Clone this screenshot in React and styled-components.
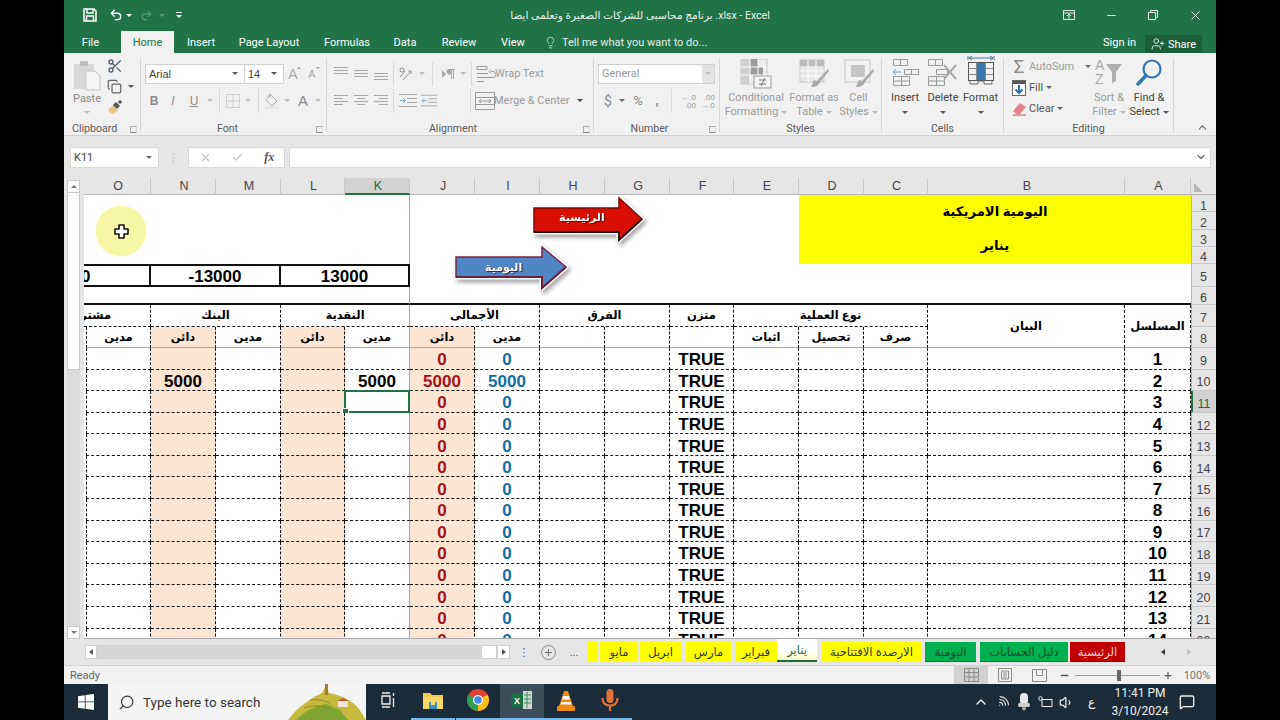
// Excel window: اليومية الامريكية sheet
import React from "react";
import styled, { createGlobalStyle } from "styled-components";
import {
  Scissors,
  Copy,
  Undo2,
  Redo2,
  X,
  Minus,
  Lightbulb,
  UserPlus,
  Check,
  Search,
  ChevronUp,
  ChevronDown,
  Plus,
  Wifi,
  Volume1,
  MessageSquare,
} from "lucide-react";

const UI_FONT = `Roboto, "DejaVu Sans", sans-serif`;
const CELL_FONT = `"Liberation Sans", "DejaVu Sans", sans-serif`;
const GREEN = "#217346";
const PEACH_BG = "#fce5d3";

const GlobalStyle = createGlobalStyle`
  html, body { margin: 0; padding: 0; background: #000; }
  #root { width: 1280px; height: 720px; overflow: hidden; }
  * { box-sizing: border-box; }
`;

const Page = styled.div`
  width: 1152px;
  height: 720px;
  margin-left: 64px;
  display: flex;
  flex-direction: column;
  font-family: ${UI_FONT};
  font-size: 11px;
  color: #444;
  background: #e6e6e6;
`;

/* ---------- title bar ---------- */
const TitleBar = styled.header`
  height: 30px;
  display: grid;
  grid-template-columns: 1fr auto 1fr;
  align-items: center;
  background: ${GREEN};
  color: #fff;
`;
const Qat = styled.div`
  display: flex;
  align-items: center;
  padding-left: 17px;
`;
const QatSlot = styled.span`
  width: ${(p) => p.$w}px;
  display: flex;
  flex-direction: column;
  gap: 2px;
  align-items: center;
  justify-content: center;
`;
const QatLine = styled.i`
  width: 6px;
  height: 1px;
  background: #fff;
`;
const Title = styled.div`
  font-size: 10.6px;
  color: #e9f1ec;
  white-space: nowrap;
`;
const WinControls = styled.div`
  display: flex;
  justify-content: flex-end;
`;
const WinBtn = styled.span`
  width: 42px;
  display: flex;
  justify-content: center;
  align-items: center;
`;
const Caret = styled.i`
  display: inline-block;
  width: 0;
  height: 0;
  border-left: 3px solid transparent;
  border-right: 3px solid transparent;
  border-top: 3px solid ${(p) => p.$color || "#777"};
  flex: none;
`;

/* ---------- ribbon tabs ---------- */
const TabRow = styled.nav`
  height: 23px;
  display: flex;
  align-items: flex-end;
  background: ${GREEN};
  color: #fff;
  font-size: 11px;
`;
const RibbonTab = styled.span`
  width: ${(p) => p.$w}px;
  height: 22px;
  display: flex;
  align-items: center;
  justify-content: center;
  padding-right: ${(p) => p.$pr || 0}px;
  background: ${(p) => (p.$active ? "#f1f1f1" : "transparent")};
  color: ${(p) => (p.$active ? GREEN : "#fff")};
`;
const TellMe = styled.span`
  margin-left: 10px;
  height: 22px;
  display: flex;
  align-items: center;
  gap: 5px;
  color: #e3eee8;
`;
const SignIn = styled.span`
  margin-left: auto;
  height: 22px;
  display: flex;
  align-items: center;
  margin-right: 9px;
`;
const Share = styled.span`
  width: 57px;
  height: 18px;
  margin-right: 14px;
  display: flex;
  align-items: center;
  justify-content: center;
  gap: 3px;
  background: #1b5f39;
`;

/* ---------- ribbon ---------- */
const Ribbon = styled.section`
  height: 83px;
  display: flex;
  background: #f1f1f1;
  border-bottom: 1px solid #cfcfcf;
`;
const Group = styled.div`
  width: ${(p) => p.$w}px;
  display: flex;
  flex-direction: column;
  flex: none;
`;
const GroupBody = styled.div`
  height: 67px;
  display: flex;
`;
const GroupLabel = styled.div`
  position: relative;
  flex: 1;
  display: flex;
  align-items: center;
  justify-content: ${(p) => (p.$left ? "flex-start" : "center")};
  padding-top: 2px;
  padding-left: ${(p) => (p.$left ? 8 : 0)}px;
  padding-right: ${(p) => p.$pr || 0}px;
  font-size: 10.6px;
  color: #5a5a5a;
`;
const Launcher = styled.i`
  position: absolute;
  right: 3px;
  top: 6px;
  width: 7px;
  height: 7px;
  border-left: 1px solid #aaa;
  border-top: 1px solid #aaa;
  border-right: 1px solid #ddd;
  border-bottom: 1px solid #888;
`;
const GroupSep = styled.i`
  width: 1px;
  height: 74px;
  margin-top: 5px;
  background: #d6d6d6;
  flex: none;
`;
const Collapse = styled.div`
  flex: 1;
  display: flex;
  justify-content: flex-end;
  align-items: flex-end;
  padding: 0 7px 1px 0;
`;
const Stack = styled.div`
  display: flex;
  flex-direction: column;
  padding-top: ${(p) => p.$top ?? 7}px;
`;
const ToolRow = styled.div`
  height: 27px;
  display: flex;
  align-items: center;
  padding-left: ${(p) => p.$pad || 0}px;
`;
const Tool = styled.span`
  width: ${(p) => p.$w}px;
  height: 20px;
  display: flex;
  align-items: center;
  justify-content: center;
  color: ${(p) => p.$color || "#8b8b8b"};
  font-size: ${(p) => p.$size || 12}px;
  font-weight: ${(p) => p.$weight || 400};
  font-family: ${(p) => (p.$cell ? CELL_FONT : "inherit")};
  font-style: ${(p) => (p.$italic ? "italic" : "normal")};
  text-decoration: ${(p) => (p.$under ? "underline" : "none")};
  flex: none;
  white-space: nowrap;
`;
const SizeA = styled(Tool)`
  position: relative;
  &::after {
    content: "";
    position: absolute;
    right: ${(p) => p.$tick}px;
    top: 3px;
    border-left: 2px solid transparent;
    border-right: 2px solid transparent;
    ${(p) => (p.$down ? "border-top: 2px solid #999;" : "border-bottom: 2px solid #999;")}
  }
`;
const Div = styled.span`
  width: ${(p) => p.$w}px;
  height: 24px;
  display: flex;
  justify-content: center;
  flex: none;
  &::before {
    content: "";
    width: 1px;
    background: #d9d9d9;
  }
`;
const Combo = styled.span`
  width: ${(p) => p.$w}px;
  height: 20px;
  display: flex;
  align-items: center;
  justify-content: space-between;
  padding: 0 6px 0 3px;
  background: ${(p) => p.$bg || "#fff"};
  border: 1px solid #d0d0d0;
  margin-left: ${(p) => p.$ml || 0}px;
  margin-right: -1px;
  color: ${(p) => p.$color || "#444"};
  font-family: ${(p) => (p.$cell ? CELL_FONT : "inherit")};
  font-size: 11px;
`;
const ComboDrop = styled.span`
  width: 12px;
  height: 18px;
  margin-right: -6px;
  display: flex;
  align-items: center;
  justify-content: center;
  background: #e3e3e3;
`;
const ToolText = styled.span`
  font-size: 11px;
  margin-left: -2px;
  color: #9a9a9a;
  white-space: nowrap;
`;
const Paste = styled.div`
  width: 30px;
  margin-left: 8px;
  display: flex;
  flex-direction: column;
  align-items: center;
  padding-top: 7px;
  color: #8b8b8b;
  font-size: 11px;
`;
const PasteIcon = styled.div`
  height: 31px;
`;
const SmallColumn = styled.div`
  margin-left: 2px;
  padding-top: 3px;
  display: flex;
  flex-direction: column;
`;
const SmallRow = styled.div`
  height: 20.5px;
  display: flex;
  align-items: center;
  gap: 6px;
  padding-left: 3px;
`;
const LargeBtn = styled.div`
  width: ${(p) => p.$w}px;
  display: flex;
  flex-direction: column;
  align-items: center;
  flex: none;
  color: ${(p) => p.$color || "#9a9a9a"};
  font-size: 11px;
  line-height: 14px;
`;
const LargeIcon = styled.div`
  height: 38px;
  padding-top: ${(p) => p.$top ?? 6}px;
`;
const LabelLine = styled.div`
  height: 14px;
  display: flex;
  align-items: center;
  gap: 3px;
  white-space: nowrap;
`;
const EditCol = styled.div`
  width: 85px;
  padding: 3px 0 0 5px;
  flex: none;
`;
const EditRow = styled.div`
  height: 21px;
  display: flex;
  align-items: center;
  color: ${(p) => p.$color || "#555"};
  font-size: 11px;
  white-space: nowrap;
`;
const EditIcon = styled.span`
  width: 20px;
  display: flex;
  justify-content: center;
  flex: none;
`;

/* ---------- formula bar ---------- */
const FormulaBar = styled.div`
  height: 42px;
  padding: 0 5px 0 6px;
  display: flex;
  align-items: center;
  background: #e6e6e6;
`;
const NameBox = styled.div`
  width: 89px;
  height: 21px;
  display: flex;
  align-items: center;
  justify-content: space-between;
  padding: 0 6px 0 3px;
  background: #fff;
  border: 1px solid #d8d8d8;
  color: #444;
`;
const Grip = styled.div`
  width: 29px;
  display: flex;
  justify-content: center;
  color: #aaa;
  font-size: 10px;
`;
const FxBox = styled.div`
  width: 97px;
  height: 21px;
  display: flex;
  align-items: center;
  justify-content: space-around;
  background: #fff;
  border: 1px solid #d8d8d8;
  margin-right: 4px;
`;
const FxText = styled.span`
  font-family: "Liberation Serif", serif;
  font-style: italic;
  font-weight: 700;
  font-size: 12px;
  color: #555;
`;
const FormulaInput = styled.div`
  flex: 1;
  height: 21px;
  display: flex;
  align-items: center;
  justify-content: flex-end;
  padding-right: 3px;
  background: #fff;
  border: 1px solid #d8d8d8;
`;

/* ---------- sheet ---------- */
const SheetArea = styled.div`
  height: 461px;
  display: flex;
  background: #e6e6e6;
`;
const VScroll = styled.div`
  width: 20px;
  padding: 2px 4px 0 3px;
  display: flex;
  flex-direction: column;
  flex: none;
`;
const ScrollBtn = styled.div`
  height: 13px;
  display: flex;
  align-items: center;
  justify-content: center;
  background: #fff;
  border: 1px solid #c8c8c8;
  flex: none;
`;
const UpCaret = styled(Caret)`
  transform: rotate(180deg);
`;
const ScrollThumb = styled.div`
  height: 177px;
  background: #fff;
  border: 1px solid #c8c8c8;
  border-top: 0;
  flex: none;
`;
const ScrollTrack = styled.div`
  flex: 1;
  background: #dcdcdc;
`;
const SHEET_COLS = "67px 65px 65px 64px 65px 65px 65px 65px 65px 64px 65px 65px 64px 197px 66px 25px";
const SheetGrid = styled.div`
  position: relative;
  width: 1132px;
  height: 461px;
  overflow: hidden;
  display: grid;
  grid-template-columns: ${SHEET_COLS};
  grid-template-rows: 17px repeat(4, 17.25px) 22.5px 18px 22px 21.5px repeat(14, 21.58px);
  background: #fff;
  border-bottom: 1px solid #a8a8a8;
  font-family: ${CELL_FONT};
`;
const ColHead = styled.div`
  display: flex;
  align-items: center;
  justify-content: center;
  padding-left: 2px;
  font-size: 12.5px;
  color: ${(p) => (p.$selected ? "#1d6b40" : "#444")};
  background: ${(p) => (p.$selected ? "#d2d2d2" : "#e6e6e6")};
  border-right: 1px solid #c9c9c9;
  border-bottom: ${(p) => (p.$selected ? `2px solid ${GREEN}` : "1px solid #b5b5b5")};
`;
const Corner = styled.div`
  background: #e6e6e6;
  display: flex;
  align-items: flex-end;
  padding: 0 0 2px 3px;
  border-bottom: 1px solid #b5b5b5;
  &::before {
    content: "";
    border-left: 9px solid transparent;
    border-bottom: 9px solid #b7b7b7;
    transform: scaleX(-1);
  }
`;
const RowHead = styled.div`
  display: flex;
  align-items: center;
  justify-content: center;
  padding: 5px 1px 0 0;
  font-size: 12.5px;
  color: ${(p) => (p.$selected ? "#1d6b40" : "#444")};
  background: ${(p) => (p.$selected ? "#d2d2d2" : "#e6e6e6")};
  border-left: ${(p) => (p.$selected ? `2px solid ${GREEN}` : "1px solid #b5b5b5")};
  border-bottom: 1px solid #c9c9c9;
`;
const Blank = styled.div`
  grid-column: span ${(p) => p.$span};
  grid-row: span ${(p) => p.$rows || 1};
  border-right: ${(p) => (p.$freeze ? "1px solid #a8a8a8" : "0")};
  border-bottom: ${(p) => (p.$thick ? "2px solid #111" : "0")};
`;
const TitleCell = styled.div`
  grid-column: span 4;
  grid-row: span 4;
  display: flex;
  flex-direction: column;
  align-items: center;
  justify-content: space-around;
  padding-bottom: 2px;
  background: #ffff00;
  color: #000;
  font-weight: 700;
  font-size: 13.2px;
`;
const SumCell = styled.div`
  grid-column: span ${(p) => p.$span};
  display: flex;
  align-items: center;
  justify-content: center;
  overflow: hidden;
  padding-top: 3px;
  color: #000;
  font-weight: 700;
  font-size: 17px;
  border-top: 2px solid #111;
  border-bottom: 2px solid #111;
  border-right: 2px solid #111;
`;
const Clipped = styled.span`
  margin-left: -3px;
  margin-right: auto;
`;
const HeadCell = styled.div`
  grid-column: span ${(p) => p.$span || 1};
  grid-row: span ${(p) => p.$rows || 1};
  display: flex;
  align-items: center;
  justify-content: ${(p) => (p.$end ? "flex-end" : "center")};
  overflow: hidden;
  margin-left: ${(p) => (p.$first ? 2 : 0)}px;
  padding-right: ${(p) => (p.$end ? 39 : 0)}px;
  color: #000;
  font-weight: 700;
  font-size: 11.5px;
  white-space: nowrap;
  background: ${(p) => (p.$peach ? PEACH_BG : "#fff")};
  border-right: ${(p) => (p.$freeze ? "1px solid #a8a8a8" : "1px dashed #111")};
  border-bottom: ${(p) => (p.$freezeB ? "1px solid #a8a8a8" : "1px dashed #111")};
  border-left: ${(p) => (p.$first ? "1px dashed #111" : "0")};
`;
const Cell = styled.div`
  display: flex;
  align-items: center;
  justify-content: center;
  position: relative;
  margin-left: ${(p) => (p.$first ? 2 : 0)}px;
  padding-top: 3px;
  color: ${(p) => p.$color || "#000"};
  font-weight: 700;
  font-size: 17px;
  line-height: 1;
  background: ${(p) => (p.$peach ? PEACH_BG : "#fff")};
  border-right: ${(p) => (p.$freeze ? "1px solid #a8a8a8" : "1px dashed #111")};
  border-bottom: 1px dashed #111;
  border-left: ${(p) => (p.$first ? "1px dashed #111" : "0")};
`;
const Selection = styled.i`
  position: absolute;
  inset: -1px -1px -1px -1px;
  border: 2px solid ${GREEN};
  &::after {
    content: "";
    position: absolute;
    left: -4px;
    bottom: -4px;
    width: 5px;
    height: 5px;
    background: ${GREEN};
    border: 1px solid #fff;
  }
`;
const ArrowShape = styled.div`
  position: absolute;
  left: ${(p) => p.$left}px;
  top: ${(p) => p.$top}px;
  width: 120px;
  height: 60px;
  filter: drop-shadow(2px 3px 2px rgba(0, 0, 0, 0.35));
`;
const ArrowText = styled.span`
  position: absolute;
  left: ${(p) => p.$x}px;
  top: ${(p) => p.$y}px;
  color: #fff;
  font-size: 11px;
  font-weight: 700;
  white-space: nowrap;
  text-shadow: 1px 1px 1px rgba(60, 0, 0, 0.8);
`;
const Spotlight = styled.div`
  position: absolute;
  left: 12px;
  top: 28px;
  width: 50px;
  height: 50px;
  display: flex;
  align-items: center;
  justify-content: center;
  border-radius: 50%;
  background: #f6f6a4;
  box-shadow: 0 0 2px #f6f6a4;
`;

/* ---------- sheet tabs ---------- */
const SheetBar = styled.div`
  height: 26px;
  padding-left: 21px;
  display: flex;
  align-items: center;
  background: #e6e6e6;
`;
const HBtn = styled.span`
  width: ${(p) => p.$w}px;
  height: 14px;
  display: flex;
  align-items: center;
  justify-content: center;
  background: ${(p) => p.$bg || "#fff"};
  border: 1px solid #cfcfcf;
  flex: none;
`;
const HTrack = styled.span`
  width: 384px;
  height: 14px;
  background: #d6d6d6;
  flex: none;
`;
const BarSlot = styled.span`
  width: ${(p) => p.$w}px;
  margin-left: ${(p) => p.$ml || 0}px;
  display: flex;
  align-items: center;
  justify-content: center;
  color: #555;
  flex: none;
`;
const AddSheet = styled.span`
  width: 15px;
  height: 15px;
  display: flex;
  align-items: center;
  justify-content: center;
  border: 1px solid #888;
  border-radius: 50%;
`;
const SheetTab = styled.span`
  width: ${(p) => p.$w}px;
  height: 20px;
  margin-left: ${(p) => p.$ml || 0}px;
  margin-top: 0;
  display: flex;
  align-items: center;
  justify-content: center;
  overflow: hidden;
  flex: none;
  font-size: 11.5px;
  font-family: ${CELL_FONT};
  white-space: nowrap;
  color: ${(p) => p.$color};
  background: ${(p) => p.$bg};
  border-bottom: 1px solid ${(p) => p.$edge || "transparent"};
`;
const ActiveTab = styled(SheetTab)`
  height: 23px;
  margin-top: -3px;
  color: #1d6b40;
  background: linear-gradient(#fff 55%, #fbfbc0);
  border-bottom: 2px solid #1d6b40;
`;
const TabArrow = styled.i`
  width: 0;
  height: 0;
  border-top: 3.5px solid transparent;
  border-bottom: 3.5px solid transparent;
  ${(p) => (p.$left ? `border-right: 4px solid ${p.$color};` : `border-left: 4px solid ${p.$color};`)}
`;

/* ---------- status bar ---------- */
const StatusBar = styled.footer`
  height: 19px;
  padding-left: 6px;
  display: flex;
  align-items: center;
  background: #f1f1f1;
  border-top: 1px solid #d4d4d4;
  color: #666;
  font-size: 11px;
`;
const ReadyText = styled.span`
  margin-right: auto;
`;
const ViewBtn = styled.span`
  width: ${(p) => p.$w}px;
  height: 18px;
  display: flex;
  align-items: center;
  justify-content: center;
  background: ${(p) => (p.$active ? "#d2d2d2" : "transparent")};
  flex: none;
`;
const ZoomTrack = styled.span`
  position: relative;
  width: 85px;
  height: 1px;
  background: #9a9a9a;
  margin: 0 3px;
  flex: none;
`;
const ZoomThumb = styled.i`
  position: absolute;
  left: 42px;
  top: -5px;
  width: 4px;
  height: 11px;
  background: #666;
`;
const Percent = styled.span`
  width: 43px;
  padding-left: 5px;
  text-align: center;
  color: #777;
`;

/* ---------- task bar ---------- */
const TaskBar = styled.div`
  height: 36px;
  display: flex;
  align-items: stretch;
  background: #1a2c39;
  color: #fff;
`;
const StartBtn = styled.div`
  width: 44px;
  display: flex;
  align-items: center;
  justify-content: center;
`;
const SearchBox = styled.div`
  width: 258px;
  display: flex;
  align-items: center;
  padding-left: 10px;
  gap: 8px;
  background: #f4f4f4;
  color: #333;
  font-size: 13.5px;
  overflow: hidden;
`;
const SearchGlyph = styled(Search)`
  transform: scaleX(-1);
`;
const Hill = styled.svg`
  margin-left: auto;
  flex: none;
`;
const TaskIcon = styled.div`
  width: 44px;
  margin-left: ${(p) => p.$ml || 0}px;
  display: flex;
  align-items: center;
  justify-content: center;
  padding-bottom: 2px;
  background: ${(p) => (p.$active ? "#3b4e5a" : "transparent")};
  border-bottom: 2px solid ${(p) => (p.$run ? "#76b9ed" : "transparent")};
  flex: none;
`;
const Tray = styled.div`
  margin-left: auto;
  padding-right: 15px;
  display: flex;
  align-items: center;
`;
const TraySlot = styled.span`
  width: ${(p) => p.$w}px;
  display: flex;
  justify-content: center;
  align-items: center;
  font-size: 12px;
  flex: none;
`;
const TrayWifi = styled(Wifi)`
  transform: rotate(45deg);
`;
const Clock = styled.div`
  width: 66px;
  text-align: center;
  font-size: 12px;
  line-height: 18px;
  color: #f0f0f0;
`;

/* ---------- drawn icons ---------- */
const Lines = ({ rows, w = 14, color = "#a5a5a5" }) => (
  <svg width={w} height="16" viewBox={`0 0 ${w} 16`}>
    {rows.map(([y, x1, x2], i) => (
      <line key={i} x1={x1} x2={x2} y1={y} y2={y} stroke={color} strokeWidth="1" />
    ))}
  </svg>
);
const row3 = (a, b, c) => [
  [a, 0, 14],
  [b, 0, 14],
  [c, 0, 14],
];
const leftRows = [[2.5, 0, 14], [5.5, 0, 9], [8.5, 0, 14], [11.5, 0, 9]];
const midRows = [[2.5, 0, 14], [5.5, 3, 11], [8.5, 0, 14], [11.5, 3, 11]];
const rightRows = [[2.5, 0, 14], [5.5, 5, 14], [8.5, 0, 14], [11.5, 5, 14]];

const SaveIcon = () => (
  <svg width="14" height="14" viewBox="0 0 14 14" fill="none" stroke="#fff" strokeWidth="1.5">
    <path d="M1 1h10l2 2v10H1z" />
    <path d="M4 1v4h6V1M3.5 13V8h7v5" />
  </svg>
);
const RestoreIcon = () => (
  <svg width="10" height="10" viewBox="0 0 10 10" fill="none" stroke="#e8f0eb">
    <path d="M.5 2.5h7v7h-7zM2.5 2.5v-2h7v7h-2" />
  </svg>
);
const DisplayIcon = () => (
  <svg width="12" height="10" viewBox="0 0 12 10" fill="none" stroke="#e8f0eb">
    <path d="M.5.5h11v9H.5zM.5 3h11M6 9V4.5M4 6l2-2 2 2" />
  </svg>
);
const PasteGlyph = () => (
  <svg width="28" height="31" viewBox="0 0 28 31">
    <rect x="1" y="4" width="20" height="25" fill="#d8d8d8" />
    <rect x="7" y="1" width="8" height="5" rx="1" fill="#bdbdbd" />
    <path d="M13 11h9l5 5v14H13z" fill="#f6f6f6" stroke="#c4c4c4" />
  </svg>
);
const PainterIcon = () => (
  <svg width="16" height="16" viewBox="0 0 16 16">
    <path d="M1 11l5-5 5 5-4 4c-2 0-5-2-6-4z" fill="#e5c77a" />
    <path d="M6 6l3-3 4 4-3 3z" fill="#555" />
    <path d="M11 3l2-2 2 2-2 2z" fill="#444" />
  </svg>
);
const BorderIcon = () => (
  <svg width="14" height="14" viewBox="0 0 14 14" fill="none" stroke="#b5b5b5" strokeDasharray="1 1">
    <path d="M.5.5h13v13H.5zM7 .5v13M.5 7h13" />
  </svg>
);
const FillIcon = () => (
  <svg width="17" height="16" viewBox="0 0 17 16" fill="none" stroke="#a8a8a8">
    <path d="M6 1l7 7-5 5-6-6z" />
    <path d="M6 1v4" />
    <rect x="1" y="13.5" width="13" height="2" fill="#e4e4e4" stroke="none" />
  </svg>
);
const OrientIcon = () => (
  <svg width="18" height="16" viewBox="0 0 18 16" fill="none" stroke="#8f8f8f">
    <path d="M2 11l5-6M5 14L13 5M13 5h-3M13 5v3" />
    <circle cx="4" cy="4" r="2" />
  </svg>
);
const RtlIcon = () => (
  <svg width="14" height="12" viewBox="0 0 14 12" fill="#a8a8a8">
    <path d="M0 2l4 4-4 4z" />
    <path d="M6 1h7v1h-1v9h-1V2h-1v9H9V6a2.5 2.5 0 0 1-3-5z" />
  </svg>
);
const WrapIcon = () => (
  <svg width="20" height="18" viewBox="0 0 20 18" fill="none" stroke="#999">
    <path d="M1 1.5h10v3H1zM1 8.5h11M1 12.5h11M1 16.5h7M12 12.5h5a2 2 0 0 0 0-6h-2M15 4.5l-2 2 2 2" />
  </svg>
);
const MergeIcon = () => (
  <svg width="22" height="18" viewBox="0 0 22 18" fill="none" stroke="#9a9a9a">
    <path d="M1.5.5h19v17h-19zM1.5 5.5h19M1.5 12.5h19M5 9h12M5 9l2-2M5 9l2 2M17 9l-2-2M17 9l-2 2" />
  </svg>
);
const IndentIcon = () => (
  <svg width="18" height="14" viewBox="0 0 18 14" fill="none" stroke="#a3a3a3">
    <path d="M0 .5h18M8 4.5h10M8 8.5h10M0 12.5h18" />
    <path d="M1 6.5h5M4 4l2.500 2.500L4 9" stroke="#7da4c4" />
  </svg>
);
const OutdentIcon = () => (
  <svg width="18" height="14" viewBox="0 0 18 14" fill="none" stroke="#a3a3a3">
    <path d="M0 .5h18M8 4.5h10M8 8.5h10M0 12.5h18" />
    <path d="M7 6.500H1M3.500 4L1 6.500 3.500 9" stroke="#7da4c4" />
  </svg>
);
const DecIcon = ({ top, bottom }) => (
  <svg width="18" height="20" viewBox="0 0 18 20">
    <text x="17" y="8.500" textAnchor="end" fontSize="8" fill="#9a9a9a" fontFamily={CELL_FONT}>{top}</text>
    <text x="17" y="17" textAnchor="end" fontSize="8" fill="#9a9a9a" fontFamily={CELL_FONT}>{bottom}</text>
  </svg>
);
const CondIcon = () => (
  <svg width="32" height="30" viewBox="0 0 32 30">
    <rect x="1" y="0" width="26" height="25" fill="#eee" stroke="#c8c8c8" />
    <rect x="1" y="0" width="9" height="25" fill="#cfcfcf" />
    <rect x="10" y="0" width="8" height="8" fill="#9c9c9c" />
    <rect x="10" y="8" width="13" height="8" fill="#9c9c9c" />
    <path d="M1 8h26M1 16h26M10 0v25M18 0v25" stroke="#fff" />
    <rect x="14" y="17" width="17" height="12" fill="#f4f4f4" stroke="#999" />
    <path d="M19 21h7M19 25h7M25 19l-4 8" stroke="#777" fill="none" />
  </svg>
);
const TableIcon = () => (
  <svg width="30" height="30" viewBox="0 0 30 30">
    <rect x="1" y="1" width="24" height="22" fill="#e8e8e8" stroke="#c8c8c8" />
    <rect x="1" y="1" width="24" height="6" fill="#bcbcbc" />
    <path d="M1 12h24M1 17h24M9 1v22M17 1v22" stroke="#fff" />
    <path d="M29 10L18 22l-3-1-3 7c5 0 8-2 9-5l9-11z" fill="#a9a9a9" />
  </svg>
);
const StylesIcon = () => (
  <svg width="30" height="30" viewBox="0 0 30 30">
    <rect x="1" y="1" width="25" height="22" fill="#f3f3f3" stroke="#c8c8c8" />
    <rect x="7" y="6" width="14" height="12" fill="#c7c7c7" />
    <path d="M29 10L18 22l-3-1-3 7c5 0 8-2 9-5l9-11z" fill="#a9a9a9" />
  </svg>
);
const InsertIcon = () => (
  <svg width="30" height="27" viewBox="0 0 30 27" fill="none" stroke="#9a9a9a">
    <path d="M3.500.5h14v6h-14zM10.500.5v6M3.500 17.500h16v9h-16zM3.500 22h16M11.500 17.500v9M14.500 10.500h14v5h-14zM21.500 10.500v5" />
    <path d="M3 13h8M3 13l3-3M3 13l3 3" stroke="#7a9bb8" />
  </svg>
);
const DeleteIcon = () => (
  <svg width="30" height="27" viewBox="0 0 30 27" fill="none" stroke="#9a9a9a">
    <path d="M.500.5h14v6H.500zM7.500.5v6M.500 17.500h16v9H.500zM.500 22h16M8.500 17.500v9M8.500 10.500h11v5h-11z" />
    <path d="M16 6l12 14M28 6L16 20" stroke="#a8a8a8" strokeWidth="2" />
  </svg>
);
const FormatIcon = () => (
  <svg width="28" height="32" viewBox="0 0 28 32" fill="none" stroke="#555">
    <path d="M1 1v4M27 1v4M2 3h24M2 3l3-2M2 3l3 2M26 3l-3-2M26 3l-3 2" stroke="#41719c" />
    <rect x="1.500" y="7.500" width="25" height="18" />
    <path d="M1.500 13.500h25M1.500 19.500h25M9.500 7.500v18M18.500 7.500v18" stroke="#888" />
    <rect x="10" y="8" width="8" height="17" fill="#3b77ad" stroke="none" />
    <path d="M3 25v4h8v-3h6v3h8v-4" stroke="#666" />
  </svg>
);
const FillDown = () => (
  <svg width="14" height="16" viewBox="0 0 14 16">
    <rect x=".5" y=".5" width="13" height="15" fill="#fff" stroke="#666" />
    <rect x="1" y="1" width="12" height="3" fill="#555" />
    <path d="M7 5v8M3.500 9.500L7 13l3.500-3.500" stroke="#2a6fb0" strokeWidth="2" fill="none" />
  </svg>
);
const Eraser = () => (
  <svg width="15" height="14" viewBox="0 0 15 14">
    <path d="M1 9l7-8 6 4-6 7H4z" fill="#e6848c" />
    <path d="M1 13h13" stroke="#cc4450" />
  </svg>
);
const SortIcon = () => (
  <svg width="30" height="28" viewBox="0 0 30 28">
    <text x="1" y="12" fontSize="14" fill="#aaa" fontFamily={CELL_FONT}>A</text>
    <text x="1" y="26" fontSize="14" fill="#aaa" fontFamily={CELL_FONT}>Z</text>
    <path d="M12 6h16l-6 8v9l-4 2V14z" fill="#b0b0b0" />
  </svg>
);
const FindIcon = () => (
  <svg width="28" height="30" viewBox="0 0 28 30" fill="none" stroke="#2f75b5">
    <circle cx="17" cy="11" r="8.500" strokeWidth="2.200" />
    <path d="M11 17.500L3 26" strokeWidth="3.500" strokeLinecap="round" />
  </svg>
);
const CrossCursor = () => (
  <svg width="15" height="15" viewBox="0 0 15 15">
    <path d="M5 1h5v4h4v5h-4v4H5v-4H1V5h4z" fill="#fff" stroke="#111" strokeWidth="1.600" strokeLinejoin="round" />
  </svg>
);
const GridIcon = () => (
  <svg width="15" height="14" viewBox="0 0 15 14" fill="none" stroke="#8a8a8a">
    <path d="M.5.5h14v13H.5zM.5 4.500h14M.5 9h14M5 .5v13M10 .5v13" />
  </svg>
);
const PageIcon = () => (
  <svg width="14" height="14" viewBox="0 0 14 14" fill="none" stroke="#8a8a8a">
    <path d="M.5.5h13v13H.5zM3.500 3h7v8h-7zM5 5h4M5 7h4M5 9h4" />
  </svg>
);
const BreakIcon = () => (
  <svg width="15" height="13" viewBox="0 0 15 13" fill="none" stroke="#8a8a8a">
    <path d="M.5.5h14v12H.5zM4.500.5v6h6V.5" />
  </svg>
);
const WindowsLogo = () => (
  <svg width="16" height="16" viewBox="0 0 16 16" fill="#fff">
    <path d="M0 2.200l6.800-1v6.300H0zM7.600 1.100L16 0v7.500H7.600zM0 8.300h6.800v6.500L0 13.800zM7.600 8.300H16V16l-8.400-1.200z" />
  </svg>
);
const HillArt = () => (
  <Hill width="78" height="36" viewBox="0 0 78 36">
    <path d="M0 36C10 22 24 14 34 9l4-8 3 8c12 2 24 8 30 16l7 11z" fill="#c6b93c" />
    <path d="M8 36c8-8 18-14 30-16l14 6 8 10z" fill="#7fa531" />
    <path d="M22 16c6-1 14 0 20 3M16 24c8-3 18-3 26 1" stroke="#8d8a26" fill="none" />
    <rect x="37" y="0" width="3" height="11" fill="#a77a3c" />
    <rect x="50" y="17" width="10" height="6" fill="#f0e6d2" />
    <path d="M49 17l6-3 6 3z" fill="#b75c35" />
  </Hill>
);
const TaskViewIcon = () => (
  <svg width="15" height="16" viewBox="0 0 15 16" fill="none" stroke="#f0f0f0" strokeWidth="1.300">
    <path d="M1 1h8M1 15h8M1 4h8v8H1zM12.500 1v3M12.500 6v9" />
  </svg>
);
const FolderIcon = () => (
  <svg width="20" height="17" viewBox="0 0 20 17">
    <path d="M0 1h7l2 2h11v14H0z" fill="#f3c84e" />
    <rect x="0" y="5" width="20" height="12" fill="#fbd768" />
    <rect x="6" y="10" width="8" height="7" fill="#3d8fc7" />
    <rect x="8" y="10" width="4" height="3" fill="#fbd768" />
  </svg>
);
const ChromeIcon = () => (
  <svg width="22" height="22" viewBox="0 0 22 22">
    <circle cx="11" cy="11" r="11" fill="#e34133" />
    <path d="M11 11L1.500 5.500A11 11 0 0 0 11 22z" fill="#2fa04f" />
    <path d="M11 11V22A11 11 0 0 0 20.500 5.500z" fill="#fbc116" />
    <circle cx="11" cy="11" r="5" fill="#fff" />
    <circle cx="11" cy="11" r="3.800" fill="#3f86f0" />
  </svg>
);
const ExcelIcon = () => (
  <svg width="22" height="18" viewBox="0 0 22 18">
    <rect x="0" y="2" width="12" height="14" fill="#1a6e41" />
    <text x="3" y="13" fontSize="9" fontWeight="700" fill="#fff" fontFamily={CELL_FONT}>X</text>
    <rect x="12" y="0" width="9" height="18" fill="#cfd9cf" />
    <path d="M13 4h7M13 8h7M13 12h7M16 1v16" stroke="#3c8b5e" />
  </svg>
);
const VlcIcon = () => (
  <svg width="18" height="21" viewBox="0 0 18 21">
    <path d="M7 1h4l5 15H2z" fill="#f08a12" />
    <path d="M6 6h6l1 3.500H5zM4.500 12h9l1 2.500h-11z" fill="#f5f5f5" />
    <rect x="0" y="16" width="18" height="5" rx="1" fill="#ee8a10" />
  </svg>
);
const MicIcon = () => (
  <svg width="18" height="22" viewBox="0 0 18 22" fill="none">
    <rect x="5.500" y="0" width="7" height="14" rx="3.500" fill="#e2713a" />
    <path d="M1.500 9c0 5 3 7.500 7.500 7.500S16.500 14 16.500 9M9 16.500V22" stroke="#e2713a" strokeWidth="2.200" />
  </svg>
);
const TrayMic = () => (
  <svg width="12" height="18" viewBox="0 0 12 18">
    <rect x="2" y="0" width="8" height="12" rx="4" fill="#e8e8e8" />
    <rect x="0" y="10" width="12" height="4" rx="2" fill="#cfcfcf" />
    <circle cx="6" cy="15.500" r="2" fill="#aaa" />
  </svg>
);
const BatteryIcon = () => (
  <svg width="15" height="12" viewBox="0 0 15 12" fill="none" stroke="#f0f0f0">
    <path d="M4 3.500h10v7H4z" />
    <circle cx="2.500" cy="2.500" r="1.800" />
  </svg>
);

/* ---------- data ---------- */
const COLUMNS = ["O", "N", "M", "L", "K", "J", "I", "H", "G", "F", "E", "D", "C", "B", "A"];
const PEACH = ["N", "L", "J"];
const SUB_HEADS = {
  O: "مدين", N: "دائن", M: "مدين", L: "دائن", K: "مدين", J: "دائن", I: "مدين",
  H: "", G: "", F: "", E: "اثبات", D: "تحصيل", C: "صرف",
};
const RED = "#a5121a";
const BLUE = "#116da3";
const FIRST_ROW = 9;
const LAST_ROW = 22;

const rows = [];
for (let r = FIRST_ROW; r <= LAST_ROW; r++) rows.push(r);

const cellValue = (col, row) => {
  if (col === "A") return row - 8;
  if (col === "F") return "TRUE";
  if (col === "J") return row === 10 ? 5000 : 0;
  if (col === "I") return row === 10 ? 5000 : 0;
  if ((col === "N" || col === "K") && row === 10) return 5000;
  return "";
};
const cellColor = (col) => (col === "J" ? RED : col === "I" ? BLUE : "#000");

const SHEET_TABS = [
  { name: "مايو", w: 38, ml: 2, bg: "#ffff00", color: "#333" },
  { name: "ابريل", w: 41, ml: 2, bg: "#ffff00", color: "#333" },
  { name: "مارس", w: 45, ml: 5, bg: "#ffff00", color: "#333" },
  { name: "فبراير", w: 42, ml: 4, bg: "#ffff00", color: "#333" },
  { name: "يناير", w: 40, active: true },
  { name: "الارصدة الافتتاحية", w: 99, ml: 5, bg: "#ffff00", color: "#333" },
  { name: "اليومية", w: 51, ml: 4, bg: "#00b050", color: "#1c4a2c", edge: "#0a7a38" },
  { name: "دليل الحسابات", w: 88, ml: 4, bg: "#00b050", color: "#1c4a2c", edge: "#0a7a38" },
  { name: "الرئيسية", w: 55, ml: 2, bg: "#c00000", color: "#f5d5d5", edge: "#8a0000" },
];

const Arrow = ({ left, top, fill, stroke, edge, label, textX, textY, bodyTop, bodyBottom, headX, tipY, headTop, headBottom, tipX }) => (
  <ArrowShape $left={left} $top={top}>
    <svg width="120" height="60" viewBox="0 0 120 60">
      <path
        d={`M1 ${bodyTop}H${headX}V${headTop}L${tipX} ${tipY}L${headX} ${headBottom}V${bodyBottom}H1Z`}
        fill={fill}
        stroke="#fff"
        strokeWidth="5"
        strokeLinejoin="round"
      />
      <path d={`M1 ${bodyTop}H${headX}V${headTop}L${tipX} ${tipY}L${headX} ${headBottom}V${bodyBottom}H1Z`} fill={fill} stroke={stroke} strokeWidth="1.500" />
      <path d={`M${tipX} ${tipY}L${headX} ${headBottom}V${bodyBottom}H1`} fill="none" stroke={edge} strokeWidth="2" />
    </svg>
    <ArrowText $x={textX} $y={textY}>{label}</ArrowText>
  </ArrowShape>
);

const App = () => (
  <>
    <GlobalStyle />
    <Page>
      <TitleBar>
        <Qat>
          <QatSlot $w={18}><SaveIcon /></QatSlot>
          <QatSlot $w={8} />
          <QatSlot $w={18}><Undo2 size={14} color="#fff" strokeWidth={2.4} /></QatSlot>
          <QatSlot $w={8}><Caret $color="#fff" /></QatSlot>
          <QatSlot $w={26}><Redo2 size={13} color="#5e9c79" /></QatSlot>
          <QatSlot $w={6}><Caret $color="#5e9c79" /></QatSlot>
          <QatSlot $w={28}><QatLine /><Caret $color="#fff" /></QatSlot>
        </Qat>
        <Title>برنامج محاسبى للشركات الصغيرة وتعلمى ايضا .xlsx - Excel</Title>
        <WinControls>
          <WinBtn><DisplayIcon /></WinBtn>
          <WinBtn><Minus size={13} color="#e8f0eb" /></WinBtn>
          <WinBtn><RestoreIcon /></WinBtn>
          <WinBtn><X size={15} color="#e8f0eb" strokeWidth={1.4} /></WinBtn>
        </WinControls>
      </TitleBar>

      <TabRow>
        <RibbonTab $w={57} $pr={4}>File</RibbonTab>
        <RibbonTab $w={53} $active>Home</RibbonTab>
        <RibbonTab $w={54}>Insert</RibbonTab>
        <RibbonTab $w={82}>Page Layout</RibbonTab>
        <RibbonTab $w={74}>Formulas</RibbonTab>
        <RibbonTab $w={42}>Data</RibbonTab>
        <RibbonTab $w={66}>Review</RibbonTab>
        <RibbonTab $w={42}>View</RibbonTab>
        <TellMe>
          <Lightbulb size={13} strokeWidth={1.3} />
          Tell me what you want to do...
        </TellMe>
        <SignIn>Sign in</SignIn>
        <Share><UserPlus size={14} strokeWidth={1.4} />Share</Share>
      </TabRow>

      <Ribbon>
        <Group $w={76}>
          <GroupBody>
            <Paste>
              <PasteIcon><PasteGlyph /></PasteIcon>
              <LabelLine>Paste</LabelLine>
              <LabelLine><Caret $color="#bbb" /></LabelLine>
            </Paste>
            <SmallColumn>
              <SmallRow><Scissors size={16} color="#4f6272" /></SmallRow>
              <SmallRow><Copy size={15} color="#666" /><Caret $color="#555" /></SmallRow>
              <SmallRow><PainterIcon /></SmallRow>
            </SmallColumn>
          </GroupBody>
          <GroupLabel $left>Clipboard<Launcher /></GroupLabel>
        </Group>
        <GroupSep />

        <Group $w={185}>
          <GroupBody>
            <Stack>
              <ToolRow $pad={4}>
                <Combo $w={100} $cell>Arial<Caret $color="#555" /></Combo>
                <Combo $w={40} $cell>14<Caret $color="#555" /></Combo>
                <SizeA $w={20} $size={14} $color="#aaa" $cell $tick={2}>A</SizeA>
                <SizeA $w={18} $size={11} $color="#aaa" $cell $tick={1} $down>A</SizeA>
              </ToolRow>
              <ToolRow $pad={4}>
                <Tool $w={18} $weight={700} $cell>B</Tool>
                <Tool $w={20} $italic $cell>I</Tool>
                <Tool $w={22} $under $cell>U</Tool>
                <Tool $w={9}><Caret $color="#bbb" /></Tool>
                <Div $w={10} />
                <Tool $w={18}><BorderIcon /></Tool>
                <Tool $w={12}><Caret $color="#bbb" /></Tool>
                <Div $w={8} />
                <Tool $w={20}><FillIcon /></Tool>
                <Tool $w={10}><Caret $color="#bbb" /></Tool>
                <Tool $w={22} $size={15} $cell>A</Tool>
                <Tool $w={7}><Caret $color="#bbb" /></Tool>
              </ToolRow>
            </Stack>
          </GroupBody>
          <GroupLabel $pr={12}>Font<Launcher /></GroupLabel>
        </Group>
        <GroupSep />

        <Group $w={266}>
          <GroupBody>
            <Stack>
              <ToolRow $pad={4}>
                <Tool $w={20}><Lines rows={row3(1.5, 4.5, 7.5)} /></Tool>
                <Tool $w={20}><Lines rows={row3(4.5, 7.5, 10.5)} /></Tool>
                <Tool $w={20}><Lines rows={row3(7.5, 10.5, 13.5)} /></Tool>
                <Div $w={4} />
                <Tool $w={24}><OrientIcon /></Tool>
                <Tool $w={6}><Caret $color="#bbb" /></Tool>
                <Div $w={14} />
                <Tool $w={20}><RtlIcon /></Tool>
                <Tool $w={8}><Caret $color="#bbb" /></Tool>
                <Div $w={8} />
                <Tool $w={22}><WrapIcon /></Tool>
                <ToolText>Wrap Text</ToolText>
              </ToolRow>
              <ToolRow $pad={4}>
                <Tool $w={20}><Lines rows={leftRows} /></Tool>
                <Tool $w={20}><Lines rows={midRows} /></Tool>
                <Tool $w={20}><Lines rows={rightRows} /></Tool>
                <Div $w={4} />
                <Tool $w={26}><IndentIcon /></Tool>
                <Tool $w={16}><OutdentIcon /></Tool>
                <Tool $w={29} />
                <Div $w={8} />
                <Tool $w={22}><MergeIcon /></Tool>
                <ToolText>Merge &amp; Center</ToolText>
                <Tool $w={20}><Caret $color="#444" /></Tool>
              </ToolRow>
            </Stack>
          </GroupBody>
          <GroupLabel $pr={14}>Alignment<Launcher /></GroupLabel>
        </Group>
        <GroupSep />

        <Group $w={125}>
          <GroupBody>
            <Stack>
              <ToolRow>
                <Combo $w={117} $ml={4} $color="#9a9a9a">
                  General
                  <ComboDrop><Caret $color="#bbb" /></ComboDrop>
                </Combo>
              </ToolRow>
              <ToolRow $pad={4}>
                <Tool $w={20} $size={14}>$</Tool>
                <Tool $w={8}><Caret $color="#666" /></Tool>
                <Tool $w={24} $size={13}>%</Tool>
                <Tool $w={14} $size={13} $weight={700}>,</Tool>
                <Div $w={14} />
                <Tool $w={19}><DecIcon top="←.0" bottom=".00" /></Tool>
                <Tool $w={19}><DecIcon top=".00" bottom="→.0" /></Tool>
              </ToolRow>
            </Stack>
          </GroupBody>
          <GroupLabel $pr={14}>Number<Launcher /></GroupLabel>
        </Group>
        <GroupSep />

        <Group $w={161}>
          <GroupBody>
            <LargeBtn $w={72}>
              <LargeIcon><CondIcon /></LargeIcon>
              <LabelLine>Conditional</LabelLine>
              <LabelLine>Formatting<Caret $color="#bbb" /></LabelLine>
            </LargeBtn>
            <LargeBtn $w={44}>
              <LargeIcon><TableIcon /></LargeIcon>
              <LabelLine>Format as</LabelLine>
              <LabelLine>Table<Caret $color="#bbb" /></LabelLine>
            </LargeBtn>
            <LargeBtn $w={45}>
              <LargeIcon><StylesIcon /></LargeIcon>
              <LabelLine>Cell</LabelLine>
              <LabelLine>Styles<Caret $color="#bbb" /></LabelLine>
            </LargeBtn>
          </GroupBody>
          <GroupLabel>Styles</GroupLabel>
        </Group>
        <GroupSep />

        <Group $w={121}>
          <GroupBody>
            <LargeBtn $w={46} $color="#444">
              <LargeIcon><InsertIcon /></LargeIcon>
              <LabelLine>Insert</LabelLine>
              <LabelLine><Caret $color="#555" /></LabelLine>
            </LargeBtn>
            <LargeBtn $w={30} $color="#444">
              <LargeIcon><DeleteIcon /></LargeIcon>
              <LabelLine>Delete</LabelLine>
              <LabelLine><Caret $color="#555" /></LabelLine>
            </LargeBtn>
            <LargeBtn $w={45} $color="#444">
              <LargeIcon $top={2}><FormatIcon /></LargeIcon>
              <LabelLine>Format</LabelLine>
              <LabelLine><Caret $color="#555" /></LabelLine>
            </LargeBtn>
          </GroupBody>
          <GroupLabel>Cells</GroupLabel>
        </Group>
        <GroupSep />

        <Group $w={169}>
          <GroupBody>
            <EditCol>
              <EditRow $color="#9a9a9a">
                <EditIcon><Tool $w={20} $size={19} $color="#8c8c8c">Σ</Tool></EditIcon>
                AutoSum&nbsp;&nbsp;&nbsp;&nbsp;
                <Caret $color="#666" />
              </EditRow>
              <EditRow>
                <EditIcon><FillDown /></EditIcon>
                Fill&nbsp;<Caret $color="#666" />
              </EditRow>
              <EditRow>
                <EditIcon><Eraser /></EditIcon>
                Clear&nbsp;<Caret $color="#666" />
              </EditRow>
            </EditCol>
            <LargeBtn $w={40}>
              <LargeIcon $top={5}><SortIcon /></LargeIcon>
              <LabelLine>Sort &amp;</LabelLine>
              <LabelLine>Filter<Caret $color="#bbb" /></LabelLine>
            </LargeBtn>
            <LargeBtn $w={40} $color="#444">
              <LargeIcon $top={5}><FindIcon /></LargeIcon>
              <LabelLine>Find &amp;</LabelLine>
              <LabelLine>Select<Caret $color="#555" /></LabelLine>
            </LargeBtn>
          </GroupBody>
          <GroupLabel>Editing</GroupLabel>
        </Group>
        <GroupSep />
        <Collapse><ChevronUp size={13} color="#666" strokeWidth={2} /></Collapse>
      </Ribbon>

      <FormulaBar>
        <NameBox>K11<Caret $color="#666" /></NameBox>
        <Grip>⋮</Grip>
        <FxBox>
          <X size={13} color="#c4c4c4" />
          <Check size={13} color="#c4c4c4" />
          <FxText>fx</FxText>
        </FxBox>
        <FormulaInput><ChevronDown size={12} color="#666" strokeWidth={2.4} /></FormulaInput>
      </FormulaBar>

      <SheetArea>
        <VScroll>
          <ScrollBtn><UpCaret $color="#777" /></ScrollBtn>
          <ScrollThumb />
          <ScrollTrack />
          <ScrollBtn><Caret $color="#777" /></ScrollBtn>
        </VScroll>
        <SheetGrid>
          {COLUMNS.map((c) => (
            <ColHead key={c} $selected={c === "K"}>{c}</ColHead>
          ))}
          <Corner />

          <Blank $span={5} $rows={4} $freeze />
          <Blank $span={6} $rows={4} />
          <TitleCell>
            <span>اليومية الامريكية</span>
            <span>يناير</span>
          </TitleCell>
          <RowHead>1</RowHead>
          <RowHead>2</RowHead>
          <RowHead>3</RowHead>
          <RowHead>4</RowHead>

          <SumCell $span={1}><Clipped>0</Clipped></SumCell>
          <SumCell $span={2}>-13000</SumCell>
          <SumCell $span={2}>13000</SumCell>
          <Blank $span={10} />
          <RowHead>5</RowHead>

          <Blank $span={5} $freeze $thick />
          <Blank $span={10} $thick />
          <RowHead>6</RowHead>

          <HeadCell $end>مشتر</HeadCell>
          <HeadCell $span={2}>البنك</HeadCell>
          <HeadCell $span={2} $freeze>النقدية</HeadCell>
          <HeadCell $span={2}>الأجمالى</HeadCell>
          <HeadCell $span={2}>الفرق</HeadCell>
          <HeadCell>متزن</HeadCell>
          <HeadCell $span={3}>نوع العملية</HeadCell>
          <HeadCell $rows={2} $freezeB>البيان</HeadCell>
          <HeadCell $rows={2} $freezeB>المسلسل</HeadCell>
          <RowHead>7</RowHead>
          {COLUMNS.slice(0, 13).map((c, i) => (
            <HeadCell key={c} $first={i === 0} $peach={PEACH.includes(c)} $freeze={c === "K"} $freezeB>
              {SUB_HEADS[c]}
            </HeadCell>
          ))}
          <RowHead>8</RowHead>

          {rows.map((r) => (
            <React.Fragment key={r}>
              {COLUMNS.map((c, i) => (
                <Cell
                  key={c}
                  $first={i === 0}
                  $peach={PEACH.includes(c)}
                  $freeze={c === "K"}
                  $color={cellColor(c)}
                >
                  {cellValue(c, r)}
                  {c === "K" && r === 11 && <Selection />}
                </Cell>
              ))}
              <RowHead $selected={r === 11}>{r}</RowHead>
            </React.Fragment>
          ))}

          <Spotlight><CrossCursor /></Spotlight>
          <Arrow
            left={449} top={17} fill="#d80f00" stroke="#7c0b05" edge="#2a0a08"
            label="الرئيسية" textX={26} textY={16}
            bodyTop={13} bodyBottom={37} headX={86} headTop={3} headBottom={45} tipX={109} tipY={24}
          />
          <Arrow
            left={371} top={66} fill="#4f86c6" stroke="#7a2343" edge="#6a1f3c"
            label="اليومية" textX={30} textY={17}
            bodyTop={13} bodyBottom={33} headX={87} headTop={3} headBottom={44} tipX={111} tipY={23}
          />
        </SheetGrid>
      </SheetArea>

      <SheetBar>
        <HBtn $w={12}><TabArrow $left $color="#555" /></HBtn>
        <HTrack />
        <HBtn $w={16} />
        <HBtn $w={13}><TabArrow $color="#555" /></HBtn>
        <BarSlot $w={28}>⋮</BarSlot>
        <BarSlot $w={20}><AddSheet><Plus size={11} color="#666" /></AddSheet></BarSlot>
        <BarSlot $w={32}>...</BarSlot>
        <SheetTab $w={10} $ml={-2} $bg="#ffff00" $color="#333" />
        {SHEET_TABS.map((t) =>
          t.active ? (
            <ActiveTab key={t.name} $w={t.w}>{t.name}</ActiveTab>
          ) : (
            <SheetTab key={t.name} $w={t.w} $ml={t.ml} $bg={t.bg} $color={t.color} $edge={t.edge}>{t.name}</SheetTab>
          )
        )}
        <BarSlot $w={16} $ml={30}><TabArrow $left $color="#333" /></BarSlot>
        <BarSlot $w={36}><TabArrow $color="#bbb" /></BarSlot>
      </SheetBar>

      <StatusBar>
        <ReadyText>Ready</ReadyText>
        <ViewBtn $w={34} $active><GridIcon /></ViewBtn>
        <ViewBtn $w={34}><PageIcon /></ViewBtn>
        <ViewBtn $w={34}><BreakIcon /></ViewBtn>
        <ViewBtn $w={16}><Minus size={11} color="#555" strokeWidth={3} /></ViewBtn>
        <ZoomTrack><ZoomThumb /></ZoomTrack>
        <ViewBtn $w={10}><Plus size={11} color="#555" strokeWidth={3} /></ViewBtn>
        <Percent>100%</Percent>
      </StatusBar>

      <TaskBar>
        <StartBtn><WindowsLogo /></StartBtn>
        <SearchBox>
          <SearchGlyph size={17} color="#333" strokeWidth={1.6} />
          Type here to search
          <HillArt />
        </SearchBox>
        <TaskIcon><TaskViewIcon /></TaskIcon>
        <TaskIcon $run $ml={1}><FolderIcon /></TaskIcon>
        <TaskIcon $run $ml={1}><ChromeIcon /></TaskIcon>
        <TaskIcon $run $active><ExcelIcon /></TaskIcon>
        <TaskIcon $run><VlcIcon /></TaskIcon>
        <TaskIcon $run><MicIcon /></TaskIcon>
        <Tray>
          <TraySlot $w={22}><ChevronUp size={16} color="#eee" /></TraySlot>
          <TraySlot $w={22}><TrayWifi size={14} color="#ddd" /></TraySlot>
          <TraySlot $w={20}><TrayMic /></TraySlot>
          <TraySlot $w={22}><BatteryIcon /></TraySlot>
          <TraySlot $w={20}><Volume1 size={15} color="#eee" /></TraySlot>
          <TraySlot $w={31}>ع</TraySlot>
          <Clock>
            <div>11:41 PM</div>
            <div>3/10/2024</div>
          </Clock>
          <TraySlot $w={28}><MessageSquare size={16} color="#eee" /></TraySlot>
        </Tray>
      </TaskBar>
    </Page>
  </>
);

export default App;
